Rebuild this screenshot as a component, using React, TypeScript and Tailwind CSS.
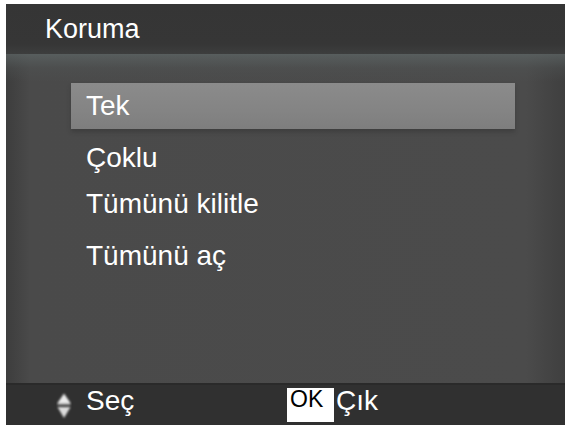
const items = [
  { label: "Tek", mt: "mt-0", active: true },
  { label: "Çoklu", mt: "mt-[6px]", active: false },
  { label: "Tümünü kilitle", mt: "mt-0", active: false },
  { label: "Tümünü aç", mt: "mt-[6px]", active: false },
];

const UpDownIcon = () => (
  <svg width="16" height="30" viewBox="0 0 16 30" className="mt-[6px]">
    <defs>
      <filter id="soft" x="-30%" y="-30%" width="160%" height="160%">
        <feGaussianBlur stdDeviation="1" />
      </filter>
    </defs>
    <g filter="url(#soft)">
      <path d="M1.5 12 L8 2.5 L14.5 12 Z" fill="#ececec" />
      <rect x="1.5" y="12" width="13" height="2" fill="#a9a9a9" />
      <path d="M1.5 16 L14.5 16 L8 27 Z" fill="#dcdcdc" />
    </g>
  </svg>
);

export default function App() {
  return (
    <div className="h-[428px] w-[570px] bg-white pl-[6px] pt-[4px] font-['Liberation_Sans',Arial,sans-serif]">
      <div className="flex h-[421px] w-[559px] flex-col overflow-hidden bg-[#4b4b4b]">
        <header className="h-[50px] shrink-0 bg-[linear-gradient(to_bottom,#353535_0px,#363636_40px,#3d3e3e_50px)] pl-[39px] pt-[12px]">
          <h1 className="text-[27px] leading-none text-white">Koruma</h1>
        </header>

        <section className="flex-1 bg-[linear-gradient(to_bottom,rgba(92,100,100,0.75)_0px,rgba(80,84,84,0.4)_14px,rgba(75,75,75,0)_28px),linear-gradient(to_right,#3d3d3d_0px,#4a4a4a_24px,#4b4b4b_520px,#3f3f3f_559px)] pl-[65px] pt-[29px]">
          <ul className="flex w-[444px] flex-col">
            {items.map((item) => (
              <li
                key={item.label}
                className={`${item.mt} flex h-[46px] items-center pl-[15px] text-[28px] leading-none text-white ${
                  item.active
                    ? "bg-[linear-gradient(to_bottom,#8b8b8b,#848484_60%,#7e7e7e)] shadow-[0_3px_4px_rgba(40,40,40,0.35)]"
                    : ""
                }`}
              >
                {item.label}
              </li>
            ))}
          </ul>
        </section>

        <footer className="flex h-[42px] shrink-0 items-start border-t-2 border-[#2a2a2a] bg-[#303030] pl-[50px]">
          <UpDownIcon />
          <span className="ml-[14px] w-[48px] pt-[2px] text-[28px] leading-none text-white">Seç</span>
          <div className="ml-[153px] mt-[3px] h-[34px] w-[47px] bg-white pl-[3px]">
            <span className="text-[23px] leading-none text-black">OK</span>
          </div>
          <span className="ml-[2px] pt-[2px] text-[28px] leading-none text-white">Çık</span>
        </footer>
      </div>
    </div>
  );
}
